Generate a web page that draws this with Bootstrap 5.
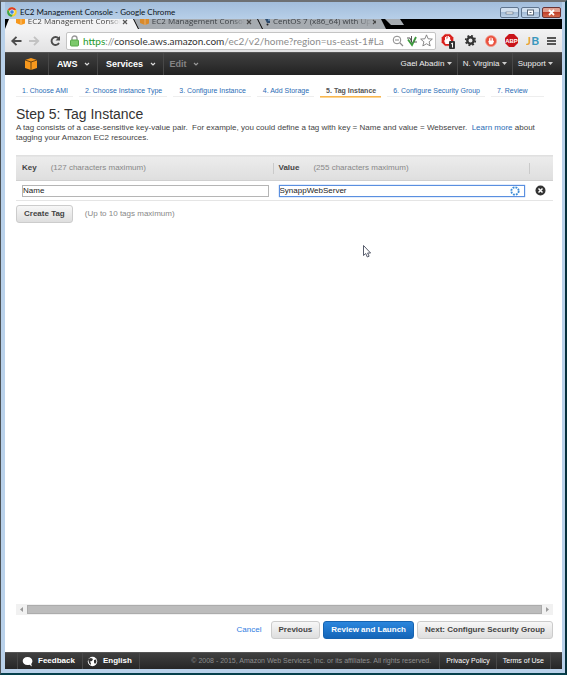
<!DOCTYPE html>
<html lang="en">
<head>
<meta charset="utf-8">
<meta name="viewport" content="width=device-width, initial-scale=1">
<title>EC2 Management Console</title>
<link href="https://cdn.jsdelivr.net/npm/bootstrap@5.3.0/dist/css/bootstrap.min.css" rel="stylesheet">
<style>
html, body { height: 100%; }
body { font-family: "Liberation Sans", Arial, sans-serif; font-size: 8px; line-height: 10px; color: #444; background: #073642; }
a { text-decoration: none; color: #2a6cb5; }
button { font-family: inherit; }
.window { min-height: 100vh; background: #b9d1ea; border: 1px solid #4c5257; border-top: 2px solid #6d7073; border-right: 2px solid #06303c; border-bottom: 2px solid #06404c; padding: 0 3px 4px 4px; }
.titlebar { height: 17px; background: linear-gradient(#a2bddb, #b7cfe8); font: 8px/14px Lato, "Open Sans", sans-serif; color: #0c1420; padding: 3px 1px 0 2px; }
.app-icon { margin-right: 3px; }
.winbtns { gap: 2px; }
.winbtn { width: 19px; height: 11px; padding: 0; border: 1px solid #60758f; border-radius: 2px; background: linear-gradient(#d2e0ef 45%, #a4bcd7 50%, #bed3e9); line-height: 0; display: flex; align-items: center; justify-content: center; }
.winbtn.quit { background: linear-gradient(#e0a091 45%, #c0402a 50%, #d4694c); border-color: #6b3434; }
.tabstrip { height: 10px; background: #000; font-family: "Open Sans", sans-serif; font-size: 8px; overflow: hidden; }
.tab { height: 10px; width: 132px; padding: 0 10px; background: #a6abb0; color: #3c4045; clip-path: polygon(4px 0, 127px 0, 132px 100%, 9px 100%); margin-right: -8px; }
.tab.current { width: 133px; padding-left: 11px; background: #f3f3f4; color: #444; clip-path: polygon(4px 0, 128px 0, 133px 100%, 0 100%); }
.tab-icon { margin-right: 3px; }
.tab-text { height: 10px; line-height: 4px; white-space: nowrap; flex: 1; -webkit-mask-image: linear-gradient(90deg, #000 85%, transparent); mask-image: linear-gradient(90deg, #000 85%, transparent); }
.newtab { width: 19px; height: 6px; padding: 0; border: 0; background: #a6abb0; clip-path: polygon(0 0, 15px 0, 100% 100%, 6px 100%); margin-left: 7px; }
.toolbar { height: 23px; background: linear-gradient(#f3f3f4, #e2e2e3); padding: 0 6px 0 5px; }
.toolbar button, .plain { border: 0; background: none; padding: 0; line-height: 0; }
.omnibox { height: 18px; border: 1px solid #c4c4c4; border-radius: 2px; background: #fff; padding: 0 2px 0 3px; min-width: 0; }
.omnibox .tool { margin-left: 2px; }
.address { font: 10px/16px Lato, "Open Sans", sans-serif; white-space: nowrap; color: #8c8c8c; min-width: 0; }
.address .scheme { color: #1f9a2a; }
.address .host { color: #333; }
.exts { gap: 8px; }
.awsbar { height: 23px; background: linear-gradient(#404040, #222); border-top: 1px solid #555; padding-left: 20px; }
.awsbar button { color: #fff; font-weight: 700; font-size: 9px; line-height: 22px; white-space: nowrap; }
.logo { margin-right: 11px; }
.awsbar .menu { padding: 0 7px 0 8px; }
.awsbar .menu svg { margin-left: 4px; }
.awsbar .menu.dim { color: #858585; padding-left: 6px; }
.awsbar .sm-menu { font-size: 8px; color: #eee; font-weight: 400; padding: 0 5px; }
.rule-left { border-left: 1px solid #484848 !important; }
.page { padding: 0 9px 0 11px; }
.steps { padding: 9px 9px 0 0; gap: 6px; font-size: 7px; line-height: 13px; }
.steps a { border-bottom: 1px solid #eee; padding: 0 5px 0 6px; white-space: nowrap; height: 13px; }
.steps a.now { border-bottom: 1px solid #f9b64d; box-shadow: 0 1px #fbd595; color: #555; font-weight: 700; }
h1 { font-size: 14px; line-height: 17px; font-weight: 400; color: #333; margin: 9px 0 0; }
.intro { margin: 0; }
.tags { margin: 12px 0 0; width: 100%; table-layout: fixed; }
.tags .c3 { width: 24px; }
.tags th { height: 25px; background: linear-gradient(#ececec, #dedede); border-top: 1px solid #e0e0e0; border-bottom: 1px solid #d0d0d0; padding: 0 6px; }
.tags th + th { background: linear-gradient(#cacaca, #cacaca) left center / 1px 11px no-repeat, linear-gradient(#ececec, #dedede); }
.tags th span { font-weight: 400; margin-left: 14px; }
.hint { color: #888; }
.tags td { height: 20px; padding: 0 4px 0 6px; border-bottom: 1px solid #e5e5e5; }
.field { height: 12px; border: 1px solid #b5b5b5; background: #fff; width: 100%; font-size: 8px; line-height: 10px; padding: 0; color: #222; display: block; border-radius: 0; outline: 0; }
.field-wrap { border: 1px solid #5a8fe0; box-shadow: 0 0 1px #5a8fe0; }
.field-wrap .field { border: 0; height: 10px; }
.create { margin: 4px 0 0; gap: 12px; }
.cbtn { height: 18px; border: 1px solid #ccc; border-radius: 3px; background: linear-gradient(#f7f7f7, #dedede); color: #444; font-weight: 700; font-size: 8px; line-height: 16px; padding: 0 6px; white-space: nowrap; }
.actions { padding: 6px 0 13px; gap: 3px; }
.actions a { color: #2f7de1; margin-right: 6px; }
.actions .cbtn { padding: 0 7px; }
.cbtn.main { background: linear-gradient(#2b86dd, #1465b8); border-color: #1663b0; color: #fff; }
.create .cbtn { padding: 0 7px; }
.hscroll { height: 11px; background: #f1f1f1; }
.thumb { background: #bcbcbc; border: 1px solid #acacac; height: 9px; }
.sitefoot { height: 17px; background: linear-gradient(#404040, #262626); border-top: 1px solid #555; color: #8d8d8d; font-size: 7px; line-height: 16px; padding-left: 12px; white-space: nowrap; }
.sitefoot a { color: #fff; }
.sitefoot .big { font-size: 8px; font-weight: 700; padding: 0 7px 0 4px; gap: 5px; }
.sitefoot .legal { padding-right: 8px; }
.sitefoot .small-link { padding: 0 6px; }
.foot-end { width: 12px; height: 16px; }
.pointer { position: absolute; left: 361px; top: 242px; }
</style>
</head>
<body>
<div class="window d-flex flex-column position-relative">
  <div class="titlebar d-flex align-items-center">
    <svg class="app-icon" width="10" height="10" viewBox="0 0 20 20"><circle cx="10" cy="10" r="9.500" fill="#f7cf2e"/><path d="M10 10L1.800 5A9.500 9.500 0 0 1 18.500 6H10z" fill="#dc3b2b"/><path d="M1.800 5A9.500 9.500 0 0 0 9 19.500L13 13 10 10 6 11z" fill="#3aa34a"/><circle cx="10" cy="10" r="4.500" fill="#3d7fe0" stroke="#fff" stroke-width="1.500"/></svg>
    <span class="flex-fill">EC2 Management Console - Google Chrome</span>
    <div class="winbtns d-flex">
      <button class="winbtn" aria-label="Minimize"><svg width="9" height="7"><rect x="1" y="3" width="7" height="2" fill="#fff" stroke="#566475" stroke-width=".6"/></svg></button>
      <button class="winbtn" aria-label="Maximize"><svg width="9" height="7"><rect x="1.500" y="1" width="6" height="5" fill="#fff" stroke="#566475"/><rect x="3.500" y="3" width="2" height="1" fill="#566475"/></svg></button>
      <button class="winbtn quit" aria-label="Close"><svg width="9" height="7"><path d="M2 1l5 5M7 1L2 6" stroke="#fff" stroke-width="1.800"/></svg></button>
    </div>
  </div>
  <div class="tabstrip d-flex">
    <div class="tab current d-flex z-3 position-relative"><svg class="tab-icon" width="10" height="7"><path d="M0 0h10v4L5 6 0 4z" fill="#f7981d"/><path d="M5 0v6" stroke="#fbc47a"/></svg><span class="tab-text">EC2 Management Consol</span><svg width="8" height="7"><path d="M2 1l4 4M6 1L2 5" stroke="#555" stroke-width="1.200"/></svg></div>
    <div class="tab d-flex z-2 position-relative"><svg class="tab-icon" width="10" height="7"><path d="M0 0h10v4L5 6 0 4z" fill="#d98a2b"/><path d="M5 0v6" stroke="#e8b070"/></svg><span class="tab-text">EC2 Management Consol</span><svg width="8" height="7"><path d="M2 1l4 4M6 1L2 5" stroke="#444" stroke-width="1.200"/></svg></div>
    <div class="tab d-flex z-1 position-relative"><svg class="tab-icon" width="10" height="7"><path d="M1 0l8 0-1 4H3z" fill="#2d4a6b"/><path d="M4 1h3" stroke="#8fb8e0"/><circle cx="3.500" cy="5.500" r="1" fill="#222"/><circle cx="7.500" cy="5.500" r="1" fill="#222"/></svg><span class="tab-text">CentOS 7 (x86_64) with Up</span><svg width="8" height="7"><path d="M2 1l4 4M6 1L2 5" stroke="#444" stroke-width="1.200"/></svg></div>
    <button class="newtab" aria-label="New tab"></button>
  </div>
  <div class="toolbar d-flex align-items-center">
    <button aria-label="Back"><svg width="13" height="12" viewBox="0 0 13 12"><path d="M11.500 6H3M6.500 1.800L2.300 6l4.200 4.200" fill="none" stroke="#4d4d4d" stroke-width="1.900"/></svg></button>
    <button class="ms-1" aria-label="Forward"><svg width="14" height="12" viewBox="0 0 13 12"><path d="M1.500 6H10M6.500 1.800l4.200 4.200-4.200 4.200" fill="none" stroke="#c2c2c2" stroke-width="1.900"/></svg></button>
    <button class="ms-2 me-1" aria-label="Reload"><svg width="13" height="12" viewBox="0 0 13 12"><path d="M10 8A4 4 0 1 1 9.500 3.200" fill="none" stroke="#4d4d4d" stroke-width="1.900"/><path d="M11 1v4.500H6.500z" fill="#4d4d4d"/></svg></button>
    <div class="omnibox d-flex align-items-center flex-fill">
      <svg class="flex-shrink-0 me-1" width="9" height="12"><path d="M2 6V3.500a2.500 2.500 0 0 1 5 0V6" fill="none" stroke="#999" stroke-width="1.400"/><rect x=".5" y="5" width="8" height="6" rx="1" fill="#7cc96b" stroke="#58a84a"/></svg>
      <div class="address flex-fill"><span class="scheme">https</span>://<span class="host">console.aws.amazon.com</span>/ec2/v2/home?region=us-east-1#La</div>
      <svg class="flex-shrink-0" width="12" height="12"><circle cx="5" cy="5" r="3.800" fill="none" stroke="#888"/><path d="M3 5h4M8 8l3 3" stroke="#888" stroke-width="1.200"/></svg>
      <svg class="tool flex-shrink-0" width="12" height="12"><path d="M2 4.500l4 5.500 4-8" fill="none" stroke="#3c9a3c" stroke-width="1.800"/><path d="M5.500 1v6M1 3h3l2 5M8 7h3" fill="none" stroke="#444" stroke-width=".9"/></svg>
      <svg class="tool flex-shrink-0" width="13" height="13" viewBox="0 0 12 12"><path d="M6 .8l1.500 3.600 3.900.3-3 2.500 1 3.800L6 9l-3.400 2 1-3.800-3-2.500 3.900-.3z" fill="#fff" stroke="#777" stroke-width=".8"/></svg>
    </div>
    <div class="exts d-flex align-items-center flex-shrink-0 ms-1">
      <button aria-label="Blocker"><svg width="16" height="16"><path d="M5 1h5l3.500 3.500v5L10 13H5L1.500 9.500v-5z" fill="#d8201d" stroke="#f3b5b0" stroke-width=".6"/><path d="M4.600 7.500l1 3h3.500l1.500-3.500-1 .3V4M8.400 7V3M6.900 7V3M5.500 7.500V4" stroke="#fff" stroke-width="1" fill="#fff"/><rect x="9" y="8" width="6" height="8" rx="1" fill="#333"/><path d="M11 11l1.500-1v4.500" stroke="#fff" fill="none"/></svg></button>
      <button aria-label="Settings"><svg width="13" height="13"><circle cx="6.500" cy="6.500" r="3.200" fill="none" stroke="#333" stroke-width="2.400"/><circle cx="6.500" cy="6.500" r="4.800" fill="none" stroke="#333" stroke-width="1.700" stroke-dasharray="1.900 1.870"/></svg></button>
      <button aria-label="Stop"><svg width="12" height="12"><circle cx="6" cy="6" r="5.500" fill="#ea4f3c" stroke="#f39a8c" stroke-width=".8"/><path d="M4.500 6V3.200M6 6V2.500M7.500 6V3.200M3.800 6h4.800L7.500 9h-3z" stroke="#fff" stroke-width=".9" fill="#fff"/></svg></button>
      <button aria-label="Adblock"><svg width="13" height="13"><path d="M4 0h5l4 4v5l-4 4H4L0 9V4z" fill="#c91419"/><text x="6.500" y="8.700" font-size="6" font-weight="700" text-anchor="middle" fill="#fff">ABP</text></svg></button>
      <button aria-label="JetBrains"><svg width="13" height="13"><text x="0" y="11" font-family="Lato, sans-serif" font-size="12" font-weight="700" fill="#e9a33a">J<tspan fill="#3b97bd">B</tspan></text></svg></button>
      <button aria-label="Menu"><svg width="9" height="10"><path d="M0 2h9M0 5h9M0 8h9" stroke="#555" stroke-width="1.800"/></svg></button>
    </div>
  </div>
  <nav class="awsbar d-flex align-items-center">
    <svg class="logo" width="12" height="12"><path d="M0 2l6-2 6 2v8l-6 2-6-2z" fill="#f7981d"/><path d="M6 4v8M0 2l6 2 6-2" stroke="#4a3010" stroke-width=".8" fill="none"/></svg>
    <button class="plain menu rule-left">AWS <svg width="6" height="5"><path d="M1 1l2 2 2-2" stroke="#ddd" fill="none" stroke-width="1.200"/></svg></button>
    <button class="plain menu rule-left">Services <svg width="6" height="5"><path d="M1 1l2 2 2-2" stroke="#ddd" fill="none" stroke-width="1.200"/></svg></button>
    <button class="plain menu dim rule-left">Edit <svg width="6" height="5"><path d="M1 1l2 2 2-2" stroke="#999" fill="none" stroke-width="1.200"/></svg></button>
    <div class="ms-auto d-flex">
      <button class="plain sm-menu">Gael Abadín <svg width="5" height="4"><path d="M0 0h5L2.500 3z" fill="#ccc"/></svg></button>
      <button class="plain sm-menu rule-left">N. Virginia <svg width="5" height="4"><path d="M0 0h5L2.500 3z" fill="#ccc"/></svg></button>
      <button class="plain sm-menu rule-left">Support <svg class="me-1" width="5" height="4"><path d="M0 0h5L2.500 3z" fill="#ccc"/></svg></button>
    </div>
  </nav>
  <main class="d-flex flex-column flex-fill bg-white">
    <div class="page d-flex flex-column flex-fill">
      <div class="steps d-flex">
        <a href="#">1. Choose AMI</a><a href="#">2. Choose Instance Type</a><a href="#">3. Configure Instance</a><a href="#">4. Add Storage</a><a href="#" class="now">5. Tag Instance</a><a href="#">6. Configure Security Group</a><a href="#" class="flex-fill">7. Review</a>
      </div>
      <h1>Step 5: Tag Instance</h1>
      <p class="intro">A tag consists of a case-sensitive key-value pair. &nbsp;For example, you could define a tag with key = Name and value = Webserver. &nbsp;<a href="#">Learn more</a> about tagging your Amazon EC2 resources.</p>
      <table class="tags">
        <colgroup><col><col><col class="c3"></colgroup>
        <thead><tr><th>Key<span class="hint">(127 characters maximum)</span></th><th>Value<span class="hint">(255 characters maximum)</span></th><th></th></tr></thead>
        <tbody><tr><td><input class="field" value="Name" aria-label="Key"></td>
          <td><div class="field-wrap d-flex align-items-center"><input class="field" value="SynappWebServer" aria-label="Value"><svg class="mx-1 flex-shrink-0" width="10" height="10"><circle cx="5" cy="5" r="3.700" fill="none" stroke="#3a8bd8" stroke-width="1.800" stroke-dasharray="1.900 1.006"/></svg></div></td>
          <td><button class="plain d-block" aria-label="Remove"><svg width="11" height="11"><circle cx="5.500" cy="5.500" r="5" fill="#333"/><path d="M3.500 3.500l4 4M7.500 3.500l-4 4" stroke="#fff" stroke-width="1.500"/></svg></button></td></tr></tbody>
      </table>
      <div class="create d-flex align-items-center"><button class="cbtn">Create Tag</button><span class="hint">(Up to 10 tags maximum)</span></div>
      <div class="mt-auto hscroll d-flex align-items-center"><svg width="11" height="9"><path d="M7 2v5L4 4.500z" fill="#999"/></svg><div class="thumb flex-fill"></div><svg width="11" height="9"><path d="M4 2v5l3-2.500z" fill="#999"/></svg></div>
      <div class="actions d-flex justify-content-end align-items-center"><a href="#">Cancel</a><button class="cbtn">Previous</button><button class="cbtn main">Review and Launch</button><button class="cbtn">Next: Configure Security Group</button></div>
    </div>
  </main>
  <footer class="sitefoot d-flex align-items-center">
    <a class="big rule-left d-flex align-items-center" href="#"><svg width="11" height="11"><path d="M5.500 1C2.500 1 .7 2.700.7 5S2.500 9 5.500 9c.8 0 1.300 0 2 -.3L10 10.500 9.200 8C10 7 10.400 6.200 10.400 5 10.400 2.700 8.500 1 5.500 1z" fill="#fff"/></svg>Feedback</a>
    <a class="big rule-left d-flex align-items-center" href="#"><svg width="11" height="11"><circle cx="5.500" cy="5.500" r="4.700" fill="#fff"/><path d="M1 3l3-1 2 1-1 2-2 .5L4 7.500 3.500 9 2 7zM7 4l2-.5L9.500 6 8 8 7 6.500z" fill="#333"/></svg>English</a>
    <span class="rule-left">&nbsp;</span>
    <span class="legal ms-auto">© 2008 - 2015, Amazon Web Services, Inc. or its affiliates. All rights reserved.</span>
    <a class="small-link rule-left" href="#">Privacy Policy</a><a class="small-link rule-left" href="#">Terms of Use</a>
    <span class="foot-end rule-left"></span>
  </footer>
  <svg class="pointer" width="10" height="15"><path d="M1.500 1.500v10l2.200-2 1.600 3.500 1.800-.8L5.600 9h3z" fill="#fff" stroke="#454b5c" stroke-width=".9"/></svg>
</div>
<script src="https://cdn.jsdelivr.net/npm/bootstrap@5.3.0/dist/js/bootstrap.bundle.min.js"></script>
</body>
</html>
